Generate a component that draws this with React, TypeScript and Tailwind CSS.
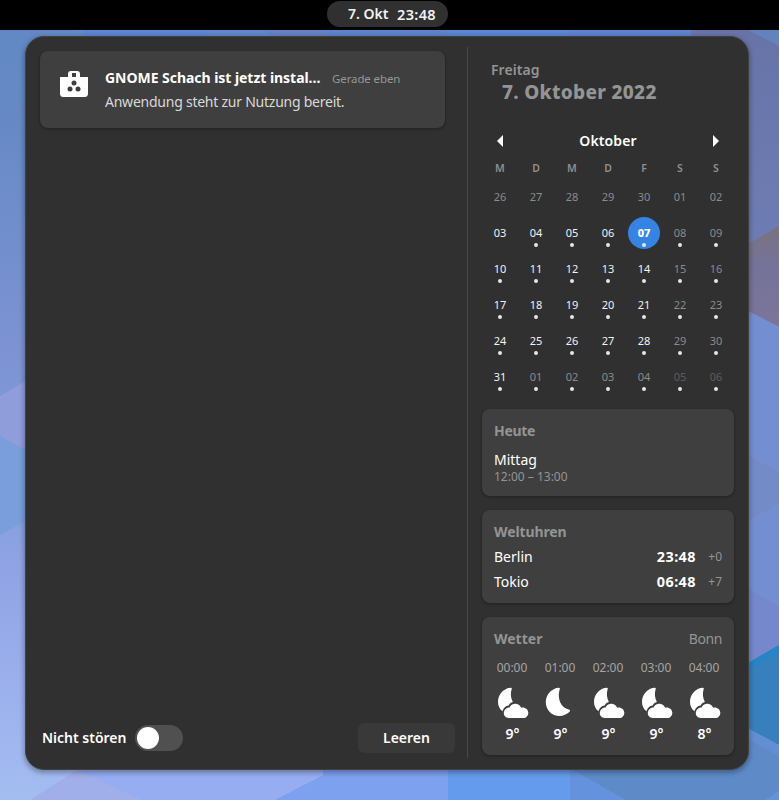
import React from "react";

const weekdays = ["M", "D", "M", "D", "F", "S", "S"];

const days = [
  "26", "27", "28", "29", "30", "01", "02",
  "03", "04", "05", "06", "07", "08", "09",
  "10", "11", "12", "13", "14", "15", "16",
  "17", "18", "19", "20", "21", "22", "23",
  "24", "25", "26", "27", "28", "29", "30",
  "31", "01", "02", "03", "04", "05", "06",
];

const TODAY = 11;
const FIRST_EVENT = 8;

function dayColor(i: number) {
  if (i === TODAY) return "text-white font-extrabold";
  if (i >= 40) return "text-[#5c5c5c]";
  if (i < 7 || i > 35 || i % 7 >= 5) return "text-[#8b8b8b]";
  return "text-[#f2f2f2]";
}

function Wallpaper() {
  return (
    <svg className="absolute inset-0 -z-10" width="779" height="800" viewBox="0 0 779 800">
      <defs>
        <linearGradient id="left" x1="0" y1="0" x2="0" y2="1">
          <stop offset="0" stopColor="#6189c3" />
          <stop offset="0.15" stopColor="#6689c6" />
          <stop offset="0.45" stopColor="#7e93d4" />
          <stop offset="0.6" stopColor="#7d9fdc" />
          <stop offset="0.7" stopColor="#8fa2e4" />
          <stop offset="0.9" stopColor="#9eb4ee" />
          <stop offset="1" stopColor="#a3bdf0" />
        </linearGradient>
        <linearGradient id="right" x1="0" y1="0" x2="0" y2="1">
          <stop offset="0" stopColor="#6874a8" />
          <stop offset="1" stopColor="#6e7db4" />
        </linearGradient>
        <linearGradient id="brown" x1="0" y1="0" x2="0" y2="1">
          <stop offset="0" stopColor="#7b7280" />
          <stop offset="0.4" stopColor="#75739a" />
          <stop offset="1" stopColor="#7b7599" />
        </linearGradient>
      </defs>
      <rect width="779" height="800" fill="url(#left)" />
      <path d="M0 396 40 373V458L0 436z" fill="#909ddb" />
      <path d="M0 436 40 458V513L0 535z" fill="#7a9edb" />
      <path d="M83 30H206V40H83z" fill="#5a86cf" />
      <path d="M206 30H330V40H206z" fill="#6382c4" />
      <path d="M206 30H264L280 40H206z" fill="#5f87c8" />
      <path d="M330 30H448V40H330z" fill="#5e83cb" />
      <path d="M448 30H570V40H448z" fill="#5a86d0" />
      <path d="M570 30H691V40H570z" fill="#5d83cb" />
      <path d="M691 30H779V260H691z" fill="url(#right)" />
      <path d="M691 30H748L779 46V30z" fill="#6184bd" />
      <path d="M740 249 779 226V327L740 307z" fill="url(#brown)" />
      <path d="M740 307 779 327V700H740z" fill="#748fd1" />
      <path d="M740 451 779 472V503L740 526z" fill="#738bc7" />
      <path d="M740 585 779 606V650L740 668z" fill="#7488cb" />
      <path d="M740 668 779 645V750L740 730z" fill="#387fbd" />
      <path d="M740 668 779 645V652L740 675z" fill="#2784c7" />
      <path d="M448 760H570V800H448z" fill="#659bec" />
      <path d="M570 760H779V800H570z" fill="#6592dd" />
      <path d="M570 768 626 800H765L779 791V745L740 724V760H570z" fill="#5e8bc8" />
      <path d="M740 724 779 745V756L740 735z" fill="#628fd3" />
      <path d="M323 760H448V800H274L323 775z" fill="#7da0ef" />
      <path d="M77 760H323V775L274 800H140L77 772z" fill="#96aef1" />
      <path d="M30 800 77 770 140 800z" fill="#a0afea" />
    </svg>
  );
}

function SoftwareIcon() {
  return (
    <svg width="28" height="26" viewBox="0 0 28 26">
      <path
        fill="#fff"
        fillRule="evenodd"
        d="M8 6V3Q8 0 11 0H17Q20 0 20 3V6H28V22.5Q28 26 24.5 26H3.5Q0 26 0 22.5V6zM12 2V6H16V2z"
      />
      <circle cx="14" cy="12" r="2.5" fill="#3d3d3d" />
      <circle cx="10" cy="18" r="2.5" fill="#3d3d3d" />
      <circle cx="18" cy="18" r="2.5" fill="#3d3d3d" />
    </svg>
  );
}

function Moon() {
  return (
    <svg width="34" height="32" viewBox="0 0 34 32" fill="#fff">
      <path d="M14.3 .8C15.7.5 16.2 1.3 15.7 2.6C12.9 11.3 16.8 21.2 24.8 22.6C26.2 22.9 26.4 24 25.6 24.8C22.8 27.4 19.2 29 15.5 29C7.8 29 1.8 22.8 1.8 15.2C1.8 7.8 7.2 1.8 14.3.8z" />
    </svg>
  );
}

function MoonCloud() {
  return (
    <svg width="34" height="32" viewBox="0 0 34 32" fill="#fff">
      <path d="M14.3.8C15.7.5 16 1.3 15.6 2.6C14.4 6.7 14.7 11 16.9 15.1C14.9 15.6 13.4 16.8 12.6 18.5C9.7 18.8 7.2 20.9 6.5 24.3C3.5 22 2 18.7 2 15C2 7.7 7.2 1.7 14.3.8z" />
      <path d="M12.6 31C9.8 31 7.8 28.9 7.8 26.1C7.8 22.8 10.4 20.3 13.7 20.4C14.6 18 16.7 16.8 19.2 16.8C22 16.8 24.1 18.2 25.1 20.7C29.2 20 32.3 22.5 32.3 26C32.3 28.9 30.1 31 27.4 31z" />
    </svg>
  );
}

const hours = [
  { time: "00:00", temp: "9°", cloudy: true },
  { time: "01:00", temp: "9°", cloudy: false },
  { time: "02:00", temp: "9°", cloudy: true },
  { time: "03:00", temp: "9°", cloudy: true },
  { time: "04:00", temp: "8°", cloudy: true },
];

const card = "rounded-lg bg-[#3f3f3f] shadow-[0_1px_2px_1px_rgba(0,0,0,0.22)]";

export default function App() {
  return (
    <div className="relative isolate flex h-[800px] w-[779px] flex-col overflow-hidden whitespace-nowrap font-['Noto_Sans',sans-serif] text-[14px] leading-5 text-white">
      <Wallpaper />
      <header className="flex h-[30px] shrink-0 justify-center bg-black pt-px">
        <div className="ml-[-4px] flex h-[26px] w-[121px] justify-between rounded-full bg-[#303030] pl-[21px] pr-3 font-semibold leading-[26px] text-[#f2f2f2]">
          <span>7. Okt</span>
          <span className="text-[14.5px] tracking-[0.35px]">23:48</span>
        </div>
      </header>

      <div className="ml-[25px] mt-1.5 flex h-[734px] w-[724px] rounded-[19px] border border-[#414141] bg-[#303030] shadow-[0_2px_5px_1px_rgba(0,0,0,0.3)]">
        <section className="flex w-[441px] flex-col pl-3.5 pt-3.5">
          <div className={`flex h-[77px] w-[405px] pl-5 pt-5 ${card}`}>
            <SoftwareIcon />
            <div className="ml-[17px] -mt-[3px]">
              <div className="flex h-5 items-center">
                <span className="font-bold tracking-[-0.04px]">GNOME Schach ist jetzt instal…</span>
                <span className="ml-[11.5px] mt-px text-[11.5px] tracking-[-0.12px] text-[#969696]">Gerade eben</span>
              </div>
              <div className="mt-1 tracking-[-0.24px] text-[#d9d9d9]">Anwendung steht zur Nutzung bereit.</div>
            </div>
          </div>
          <div className="mb-4 mt-auto flex h-[30px] w-[415px] items-center">
            <span className="ml-0.5 w-[93px] font-semibold">Nicht stören</span>
            <div className="flex h-[26px] w-12 items-center rounded-full bg-[#505050] px-0.5">
              <div className="size-[22px] rounded-full bg-white" />
            </div>
            <button className="ml-auto h-[30px] w-[97px] rounded-md bg-[#393939] font-semibold">Leeren</button>
          </div>
        </section>

        <div className="mt-2.5 h-[711px] w-px bg-[#474747]" />

        <aside className="flex w-[266px] flex-col pl-3.5 pt-[23px]">
          <div className="pl-[9px] text-[#949494]">
            <div className="font-semibold tracking-[0.08px]">Freitag</div>
            <div className="pl-[11px] text-[19px] font-extrabold leading-6 tracking-[0.3px]">7. Oktober 2022</div>
          </div>
          <div className="mt-[27px] flex h-5 w-[252px] items-center justify-between px-[15px]">
            <svg width="6" height="12" viewBox="0 0 6 12" fill="#fff"><path d="M6 0V12L0 6z" /></svg>
            <span className="font-semibold tracking-[0.1px]">Oktober</span>
            <svg width="6" height="12" viewBox="0 0 6 12" fill="#fff"><path d="M0 0V12L6 6z" /></svg>
          </div>
          <div className="mt-[7px] grid w-[252px] grid-cols-7 text-center text-[10.5px] font-semibold text-[#8f8f8f]">
            {weekdays.map((d, i) => (
              <span key={i}>{d}</span>
            ))}
          </div>
          <div className="mt-px grid w-[252px] grid-cols-7 text-[11px]">
            {days.map((d, i) => (
              <div key={i} className="flex size-9 items-center justify-center">
                <div className={`relative size-8 rounded-full text-center leading-8 ${dayColor(i)} ${i === TODAY ? "bg-[#3584e4]" : ""}`}>
                  {d}
                  {i >= FIRST_EVENT && <i className="absolute bottom-0.5 left-3.5 size-1 rounded-full bg-[#e6e6e6]" />}
                </div>
              </div>
            ))}
          </div>

          <div className={`mt-3.5 h-[87px] w-[252px] px-3 pt-3 ${card}`}>
            <div className="font-bold tracking-[-0.3px] text-[#949494]">Heute</div>
            <div className="mt-[9px]">Mittag</div>
            <div className="-mt-px text-[12px] leading-4 text-[#949494]">12:00 – 13:00</div>
          </div>

          <div className={`mt-3.5 h-[93px] w-[252px] px-3 pt-3 ${card}`}>
            <div className="font-bold tracking-[-0.1px] text-[#949494]">Weltuhren</div>
            {[["Berlin", "23:48", "+0"], ["Tokio", "06:48", "+7"]].map(([city, time, offset]) => (
              <div key={city} className="mt-[5px] flex h-5">
                <span>{city}</span>
                <span className="ml-auto text-[14.4px] font-bold tracking-[0.45px]">{time}</span>
                <span className="w-[26px] text-right text-[12px] text-[#949494]">{offset}</span>
              </div>
            ))}
          </div>

          <div className={`mt-3.5 h-[138px] w-[252px] px-3 pt-3 ${card}`}>
            <div className="flex justify-between text-[#949494]">
              <span className="font-bold">Wetter</span>
              <span className="tracking-[-0.4px]">Bonn</span>
            </div>
            <div className="-ml-1.5 mt-[9px] grid w-[240px] grid-cols-5">
              {hours.map((h) => (
                <div key={h.time} className="flex flex-col items-center">
                  <span className="text-[12px] text-[#a5a5a5]">{h.time}</span>
                  <div className="ml-[2px] mt-[9px] h-8">{h.cloudy ? <MoonCloud /> : <Moon />}</div>
                  <span className="ml-px mt-[5px] font-semibold">{h.temp}</span>
                </div>
              ))}
            </div>
          </div>
        </aside>
      </div>
    </div>
  );
}
